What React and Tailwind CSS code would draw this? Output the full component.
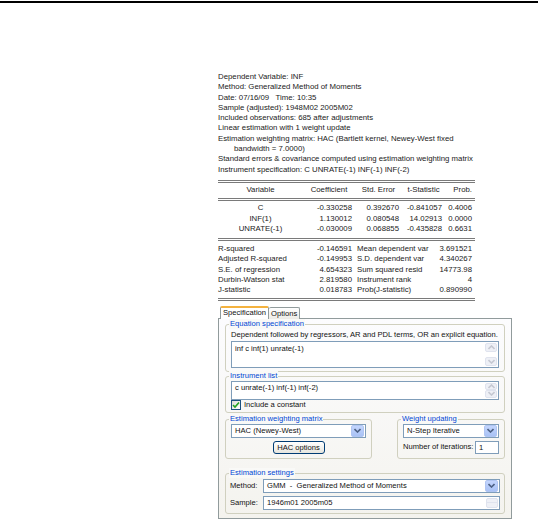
import React from "react";

const head_lines = [
    "Dependent Variable: INF",
    "Method: Generalized Method of Moments",
    "Date: 07/16/09   Time: 10:35",
    "Sample (adjusted): 1948M02 2005M02",
    "Included observations: 685 after adjustments",
    "Linear estimation with 1 weight update",
    "Estimation weighting matrix: HAC (Bartlett kernel, Newey-West fixed",
    "INDENT bandwidth = 7.0000)",
    "Standard errors & covariance computed using estimation weighting matrix",
    "Instrument specification: C UNRATE(-1) INF(-1) INF(-2)",
];

const coef_rows = [
    ["C", "-0.330258", "0.392670", "-0.841057", "0.4006"],
    ["INF(1)", "1.130012", "0.080548", "14.02913", "0.0000"],
    ["UNRATE(-1)", "-0.030009", "0.068855", "-0.435828", "0.6631"],
];

const stat_rows = [
    ["R-squared", "-0.146591", "Mean dependent var", "3.691521"],
    ["Adjusted R-squared", "-0.149953", "S.D. dependent var", "4.340267"],
    ["S.E. of regression", "4.654323", "Sum squared resid", "14773.98"],
    ["Durbin-Watson stat", "2.819580", "Instrument rank", "4"],
    ["J-statistic", "0.018783", "Prob(J-statistic)", "0.890990"],
];

function DoubleRule() {
    return <div className="border-t-[3px] border-double border-[#7a7a7a]" />;
}

function Chevron({ up, color = "#4d6185" }) {
    return (
        <svg width="7" height="5" viewBox="0 0 7 5">
            <path d={up ? "M0.5 4 L3.5 1 L6.5 4" : "M0.5 1 L3.5 4 L6.5 1"} fill="none" stroke={color} strokeWidth="1.6" />
        </svg>
    );
}

function ScrollBtns() {
    return (
        <div className="flex flex-col justify-between w-[12px] self-stretch">
            <div className="h-[9px] bg-[#eef0f6] border border-[#dfe3ee] rounded-[2px] flex items-center justify-center"><Chevron up color="#c5c8d2" /></div>
            <div className="h-[9px] bg-[#eef0f6] border border-[#dfe3ee] rounded-[2px] flex items-center justify-center"><Chevron color="#c5c8d2" /></div>
        </div>
    );
}

function Group({ label, className, children }) {
    return (
        <div className={"relative border border-[#d0d0bf] rounded-[3px] " + className}>
            <span className="absolute -top-[6px] left-[3px] px-[1px] bg-[#f9f9f7] text-[#0046d5] leading-[10px]">{label}</span>
            {children}
        </div>
    );
}

function Combo({ text, className }) {
    return (
        <div className={"flex items-center h-[14px] bg-white border border-[#7f9db9] " + className}>
            <span className="flex-1 pl-[3px] leading-[12px] whitespace-pre">{text}</span>
            <div className="w-[13px] h-[12px] mr-[1px] rounded-[2px] bg-gradient-to-b from-[#c3d5fd] to-[#a9c2f5] border border-[#b0c5f2] flex items-center justify-center">
                <Chevron />
            </div>
        </div>
    );
}

export default function App() {
    return (
        <div className="w-[538px] h-[521px] bg-white overflow-hidden text-black" style={{ fontFamily: '"Liberation Sans", Arial, sans-serif' }}>
            <div className="h-[2px] bg-black mt-[1px]" />

            {/* estimation output */}
            <div className="ml-[218px] mt-[69px] w-[257px] text-[7.8px] leading-[10.3px] text-[#222]">
                {head_lines.map((l, i) => (
                    <div key={i} className={l.startsWith("INDENT") ? "pl-[16px] whitespace-pre" : "whitespace-pre"}>
                        {l.replace("INDENT ", "")}
                    </div>
                ))}
                <div className="mt-[5px]"><DoubleRule /></div>
                <div className="grid grid-cols-[85px_52px_47px_43px_30px] pt-[2px] pb-[3px]">
                    <div className="text-center">Variable</div>
                    <div className="text-center">Coefficient</div>
                    <div className="text-center">Std. Error</div>
                    <div className="text-center">t-Statistic</div>
                    <div className="text-right pr-[3px]">Prob.</div>
                </div>
                <DoubleRule />
                <div className="grid grid-cols-[85px_52px_47px_43px_30px] pt-[2px] pb-[4px]">
                    {coef_rows.map((r, i) => (
                        <React.Fragment key={i}>
                            <div className="text-center">{r[0]}</div>
                            <div className="text-right pr-[3px]">{r[1]}</div>
                            <div className="text-right pr-[3px]">{r[2]}</div>
                            <div className="text-right pr-[3px]">{r[3]}</div>
                            <div className="text-right pr-[3px]">{r[4]}</div>
                        </React.Fragment>
                    ))}
                </div>
                <DoubleRule />
                <div className="grid grid-cols-[85px_52px_70px_50px] pt-[3px] pb-[2px]">
                    {stat_rows.map((r, i) => (
                        <React.Fragment key={i}>
                            <div>{r[0]}</div>
                            <div className="text-right pr-[3px]">{r[1]}</div>
                            <div className="pl-[2px] whitespace-nowrap">{r[2]}</div>
                            <div className="text-right pr-[3px]">{r[3]}</div>
                        </React.Fragment>
                    ))}
                </div>
                <DoubleRule />
            </div>

            {/* GMM dialog */}
            <div className="ml-[218px] mt-[5px] w-[294px] text-[7.6px] text-[#111]">
                <div className="flex items-end h-[13px]">
                    <div className="relative z-10 h-[13px] px-[2px] bg-white border border-b-0 border-[#919b9c] border-t-[2px] border-t-[#f4b23e] rounded-t-[2px] leading-[10px] ml-[2px]">Specification</div>
                    <div className="h-[12px] px-[2px] bg-gradient-to-b from-white to-[#ecebe6] border border-b-0 border-l-0 border-[#919b9c] rounded-t-[2px] leading-[11px]">Options</div>
                </div>
                <div className="-mt-[1px] h-[201px] border border-[#919b9c] bg-gradient-to-b from-[#fcfcfe] to-[#f4f3ee] px-[6px] pt-[5px] flex flex-col">
                    <Group label="Equation specification" className="px-[5px] pt-[5px] pb-[3px]">
                        <div className="leading-[10px]">Dependent followed by regressors, AR and PDL terms, OR an explicit equation.</div>
                        <div className="mt-[1px] h-[27px] bg-white border border-[#7f9db9] flex p-[1px]">
                            <div className="flex-1 pl-[2px] pt-[1px] leading-[10px]">inf c inf(1) unrate(-1)</div>
                            <ScrollBtns />
                        </div>
                    </Group>
                    <Group label="Instrument list" className="mt-[4px] px-[5px] pt-[4px] pb-[2px]">
                        <div className="h-[19px] bg-white border border-[#7f9db9] flex p-[1px]">
                            <div className="flex-1 pl-[2px] leading-[10px]">c unrate(-1) inf(-1) inf(-2)</div>
                            <ScrollBtns />
                        </div>
                        <div className="flex items-center gap-[3px] mt-[0px]">
                            <div className="w-[10px] h-[10px] border border-[#1c5180] bg-gradient-to-br from-[#dcdcd7] to-white flex items-center justify-center">
                                <svg width="8" height="8" viewBox="0 0 8 8">
                                    <path d="M1 4 L3 6 L7 1.5" fill="none" stroke="#21a121" strokeWidth="1.6" />
                                </svg>
                            </div>
                            <span className="leading-[10px]">Include a constant</span>
                        </div>
                    </Group>
                    <div className="mt-[6px] flex justify-between">
                        <Group label="Estimation weighting matrix" className="w-[147px] px-[5px] pt-[4px] pb-[4px]">
                            <Combo text="HAC (Newey-West)" />
                            <div className="flex justify-center mt-[3px]">
                                <div className="w-[52px] h-[13px] rounded-[3px] border border-[#003c74] bg-gradient-to-b from-white to-[#e6e5de] text-center leading-[11px]">HAC options</div>
                            </div>
                        </Group>
                        <Group label="Weight updating" className="w-[108px] px-[5px] pt-[4px] pb-[4px]">
                            <Combo text="N-Step Iterative" />
                            <div className="flex items-center justify-between mt-[3px]">
                                <span>Number of iterations:</span>
                                <div className="w-[24px] h-[13px] bg-white border border-[#7f9db9] pl-[3px] leading-[11px]">1</div>
                            </div>
                        </Group>
                    </div>
                    <Group label="Estimation settings" className="mt-[14px] px-[4px] pt-[5px] pb-[3px]">
                        <div className="flex items-center">
                            <span className="w-[33px]">Method:</span>
                            <Combo text="GMM  -  Generalized Method of Moments" className="flex-1" />
                        </div>
                        <div className="flex items-center mt-[3px]">
                            <span className="w-[33px]">Sample:</span>
                            <div className="flex-1 h-[14px] bg-white border border-[#7f9db9] flex p-[1px]">
                                <span className="flex-1 pl-[2px] leading-[10px]">1946m01 2005m05</span>
                                <div className="w-[12px] flex flex-col bg-[#eef0f6] border border-[#dfe3ee] rounded-[2px]">
                                    <div className="flex-1 border-b border-[#dfe3ee]" />
                                    <div className="flex-1" />
                                </div>
                            </div>
                        </div>
                    </Group>
                </div>
            </div>
        </div>
    );
}
